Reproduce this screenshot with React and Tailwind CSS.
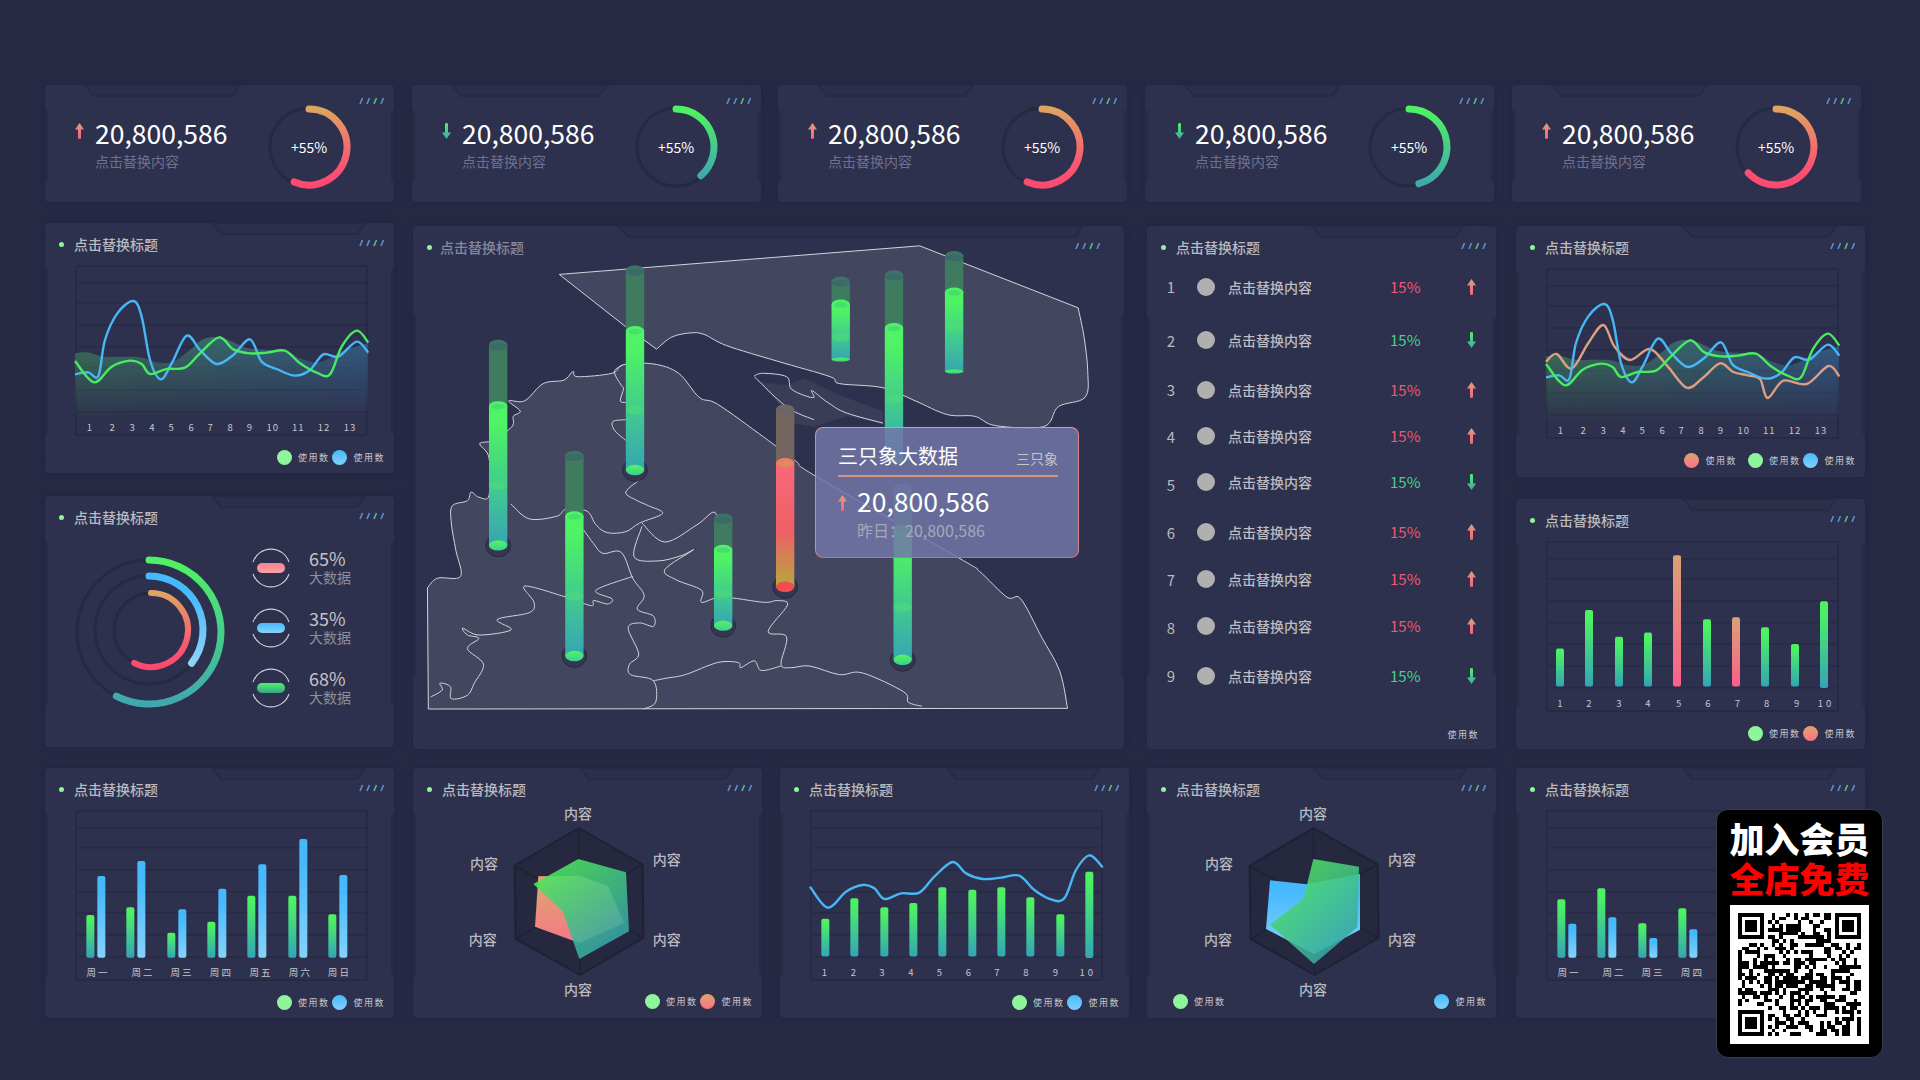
import React from "react";

// smooth line through points (catmull-rom to bezier)
const smooth = (pts) => {
  let d = `M${pts[0][0]},${pts[0][1]}`;
  for (let i = 0; i < pts.length - 1; i++) {
    const p0 = pts[i - 1] || pts[i];
    const p1 = pts[i];
    const p2 = pts[i + 1];
    const p3 = pts[i + 2] || p2;
    d += ` C${p1[0] + (p2[0] - p0[0]) / 6},${p1[1] + (p2[1] - p0[1]) / 6} ${p2[0] - (p3[0] - p1[0]) / 6},${p2[1] - (p3[1] - p1[1]) / 6} ${p2[0]},${p2[1]}`;
  }
  return d;
};

const toFrame = (pts, ox, oy, sy = 3) => pts.map(([x, y]) => [(x - ox) / 3, (y - oy) / sy]);

const parse = (s) => s.trim().split(/\s+/).map((t) => t.split(",").map(Number));

const arc = (cx, cy, r, deg) => {
  const a = (deg * Math.PI) / 180;
  return `M${cx},${cy - r} A${r},${r} 0 ${deg > 180 ? 1 : 0} 1 ${cx + r * Math.sin(a)},${cy - r * Math.cos(a)}`;
};

const poly = (pts) => pts.map((p) => p.join(",")).join(" ");

const BLUE = [[135,913],[175,907],[205,918],[225,810],[262,730],[310,693],[335,740],[360,870],[392,928],[425,880],[470,797],[510,840],[560,882],[610,855],[660,808],[695,875],[740,897],[795,917],[840,900],[880,853],[925,860],[980,815],[1015,848]];
const GREEN = [[135,873],[192,937],[245,890],[300,872],[335,882],[360,912],[410,897],[465,893],[510,850],[567,802],[610,838],[660,850],[710,848],[765,842],[810,880],[860,908],[900,913],[935,830],[980,782],[1015,818]];
const AREA = [[135,850],[170,847],[220,860],[280,860],[330,862],[380,877],[430,875],[480,840],[520,808],[570,802],[640,830],[680,838],[770,845],[810,865],[860,878],[900,865],[950,838],[1015,820]];
const TAN = [[135,866],[167,843],[212,887],[262,810],[307,756],[340,820],[387,861],[447,828],[500,880],[557,944],[605,915],[657,871],[697,897],[740,907],[777,918],[800,975],[847,923],[917,933],[982,879],[1015,910]];
const WAVE = [[107,365],[160,428],[215,380],[265,360],[300,370],[330,402],[380,385],[435,383],[480,335],[535,291],[575,325],[625,342],[680,338],[735,332],[780,375],[830,403],[870,400],[905,315],[945,271],[985,307]];

const Defs = () => (
  <svg width="0" height="0" className="absolute">
    <defs>
      <linearGradient id="gGreen" x1="0" y1="0" x2="0" y2="1"><stop offset="0.1" stopColor="#4df263" /><stop offset="1" stopColor="#34a5b5" /></linearGradient>
      <linearGradient id="gBlue" x1="0" y1="0" x2="0" y2="1"><stop offset="0.2" stopColor="#46b9fc" /><stop offset="1" stopColor="#84d3fa" /></linearGradient>
      <linearGradient id="gTan" x1="0" y1="0" x2="0" y2="1"><stop offset="0" stopColor="#d9a278" /><stop offset="1" stopColor="#f9608a" /></linearGradient>
      <linearGradient id="gRing" x1="0" y1="0" x2="0" y2="1"><stop offset="0" stopColor="#dfa45f" /><stop offset="0.75" stopColor="#fb5473" /><stop offset="1" stopColor="#fb4a70" /></linearGradient>
      <linearGradient id="gRingG" x1="0" y1="0" x2="0" y2="1"><stop offset="0.05" stopColor="#4ef064" /><stop offset="1" stopColor="#3fa8b0" /></linearGradient>
      <linearGradient id="gRingB" x1="0" y1="0" x2="0" y2="1"><stop offset="0.2" stopColor="#46b9fc" /><stop offset="1" stopColor="#8cd5f8" /></linearGradient>
      <linearGradient id="gAreaH" x1="0" y1="0" x2="1" y2="0"><stop offset="0" stopColor="#3f8a5c" /><stop offset="1" stopColor="#366a98" /></linearGradient>
      <linearGradient id="gFade" x1="0" y1="0" x2="0" y2="1"><stop offset="0" stopColor="#fff" stopOpacity="0.75" /><stop offset="1" stopColor="#fff" stopOpacity="0" /></linearGradient>
      <mask id="mFade" maskContentUnits="objectBoundingBox"><rect width="1" height="1" fill="url(#gFade)" /></mask>
      <linearGradient id="gRadarG" x1="0.2" y1="0.1" x2="0.8" y2="0.9"><stop offset="0" stopColor="#4ee45e" /><stop offset="1" stopColor="#35a3ab" /></linearGradient>
      <linearGradient id="gRadarT" x1="0.3" y1="0" x2="0.6" y2="1"><stop offset="0" stopColor="#dfa46f" /><stop offset="1" stopColor="#f8748a" /></linearGradient>
      <linearGradient id="gPillar" x1="0" y1="0" x2="0" y2="1"><stop offset="0.12" stopColor="#4ef463" /><stop offset="1" stopColor="#36a5b4" /></linearGradient>
      <linearGradient id="gPillarR" x1="0" y1="0" x2="0" y2="1"><stop offset="0" stopColor="#f76a78" /><stop offset="0.55" stopColor="#ef5f68" /><stop offset="1" stopColor="#b5a83c" /></linearGradient>
      <linearGradient id="gBase" x1="0" y1="0" x2="0" y2="1"><stop offset="0" stopColor="#52f560" /><stop offset="1" stopColor="#3ccf92" /></linearGradient>
    </defs>
  </svg>
);

// card outline details: top tab, cut sides and the four small hatches
const CardFrame = ({ w, h, notch = [167, 320], sideT = 47, sideB = 44, hatchX = 315, hatchY = 20 }) => (
  <svg className="absolute inset-0 pointer-events-none" width={w} height={h}>
    <polygon points={`0,${sideT - 3} 3,${sideT} 3,${h - sideB} 0,${h - sideB + 3}`} fill="#272a44" />
    <polygon points={`${w},${sideT - 3} ${w - 3},${sideT} ${w - 3},${h - sideB} ${w},${h - sideB + 3}`} fill="#272a44" />
    <polygon points={`${notch[0]},0 ${notch[0] + 9},11 ${notch[1] - 8},11 ${notch[1]},0`} fill="#2c2f4a" stroke="#272a44" strokeWidth="2" />
    {["#5a8fd0", "#5a8fd0", "#4fbf8f", "#5a8fd0"].map((c, i) => (
      <line key={i} x1={hatchX + i * 7} y1={hatchY + 3} x2={hatchX + i * 7 + 2.5} y2={hatchY - 3} stroke={c} strokeWidth="1.6" />
    ))}
  </svg>
);

const Title = ({ dim }) => (
  <div className="flex items-center h-[42px] pl-[14px] relative">
    <span className="w-[5px] h-[5px] rounded-full bg-[#90f59a]" />
    <span className={`text-[14px] font-medium leading-[20px] ${dim ? "ml-[8px] text-[#85879f]" : "ml-[10px] text-[#b9b9bf]"}`}>点击替换标题</span>
  </div>
);

const Legend = ({ items, between }) => (
  <div className={`flex items-center h-[15px] mt-[14px] pr-[9px] relative ${between ? "justify-between pl-[26px]" : "justify-end gap-[3px]"}`}>
    {items.map((c, i) => (
      <div key={i} className={`flex items-center gap-[6px] ${c.mr || ""}`}>
        <span className={`w-[15px] h-[15px] rounded-full ${c.cls}`} />
        <span className="text-[9px] tracking-[1.5px] text-[#c6c6cc] leading-[15px]">使用数</span>
      </div>
    ))}
  </div>
);

const GREEN_DOT = { cls: "bg-[#8ff59a]" };
const BLUE_DOT = { cls: "bg-linear-to-b from-[#46b9fc] to-[#7fd0fb]" };
const TAN_DOT = { cls: "bg-linear-to-b from-[#dfa270] to-[#fb6f84]" };

const Arrow = ({ up }) =>
  up ? (
    <svg width="9" height="16" viewBox="0 0 9 16" className="block">
      <path d="M4.5 0 L9 6.5 L6 6.5 L6 15 Q6 16 4.5 16 Q3 16 3 15 L3 6.5 L0 6.5 Z" fill="url(#gTan)" />
    </svg>
  ) : (
    <svg width="9" height="16" viewBox="0 0 9 16" className="block">
      <path d="M4.5 16 L9 9.5 L6 9.5 L6 1 Q6 0 4.5 0 Q3 0 3 1 L3 9.5 L0 9.5 Z" fill="url(#gRingG)" />
    </svg>
  );

const StatCard = ({ up, deg, cls = "" }) => (
  <div className={`relative w-[349px] h-[117px] bg-[#2e314d] rounded-[4px] shadow-[0_0_8px_rgba(32,34,58,0.6)] ${cls}`}>
    <CardFrame w={349} h={117} notch={[40, 195]} sideT={27} sideB={22} hatchY={16} />
    <div className="relative flex items-start h-full pl-[30px] pr-[40px]">
      <div className="mt-[38px] w-[9px]"><Arrow up={up} /></div>
      <div className="ml-[11px] mt-[33px]">
        <div className="text-[26.5px] leading-[30px] text-white">20,800,586</div>
        <div className="mt-[3px] text-[14px] leading-[20px] text-[#6e7091]">点击替换内容</div>
      </div>
      <div className="relative ml-auto mt-[17px] w-[90px] h-[90px]">
        <svg width="90" height="90">
          <circle cx="45" cy="45" r="39" fill="none" stroke="#262940" strokeWidth="3" />
          <path d={arc(45, 45, 38, deg)} fill="none" stroke={up ? "url(#gRing)" : "url(#gRingG)"} strokeWidth="7" strokeLinecap="round" />
        </svg>
        <div className="absolute inset-0 flex items-center justify-center text-[14px] text-white">+55%</div>
      </div>
    </div>
  </div>
);

const GRID = [17.7, 37.7, 60, 81.7, 102.7, 125, 146.7];

const ChartFrame = ({ children, labels }) => (
  <div className="ml-[30px] w-[293px] h-[171px] relative">
    <svg width="293" height="171" className="block overflow-visible">
      <rect x="1" y="1" width="291" height="169" fill="none" stroke="#272a44" strokeWidth="2" rx="2" />
      {GRID.map((y) => (
        <line key={y} x1="2" x2="291" y1={y} y2={y} stroke="#272a44" strokeWidth="1.5" />
      ))}
      {children}
      {labels.map(([t, x, ls]) => (
        <text key={t} x={x} y="162" textAnchor="middle" dominantBaseline="central" fontSize="9.5" fill="#c6c6cc" letterSpacing={ls || 0}>{t}</text>
      ))}
    </svg>
  </div>
);

const Bar = ({ x, top, bottom, fill }) => (
  <rect x={x - 4} y={top} width="8" height={bottom - top} rx="2" fill={fill} />
);

const LINE_LABELS = [["1",180],["2",248],["3",308],["4",367],["5",425],["6",485],["7",542],["8",602],["9",660],["10",728],["11",805],["12",882],["13",960]].map(([t, x]) => [t, (x - 135) / 3, 1]);

const LineChart = ({ tan }) => (
  <ChartFrame labels={LINE_LABELS}>
    <g mask="url(#mFade)">
      <path d={`${smooth(toFrame(AREA, 135, 585))} L293,155 L0,155 Z`} fill="url(#gAreaH)" />
    </g>
    {tan && <path d={smooth(toFrame(TAN, 135, 585))} fill="none" stroke="#dd9f80" strokeWidth="2.4" />}
    <path d={smooth(toFrame(BLUE, 135, 585))} fill="none" stroke="#47b7f6" strokeWidth="2.4" />
    <path d={smooth(toFrame(GREEN, 135, 585))} fill="none" stroke="#47ed5f" strokeWidth="2.4" />
  </ChartFrame>
);

const WEEK = [["周 一",173],["周 二",308],["周 三",425],["周 四",543],["周 五",662],["周 六",780],["周 日",897]];
const WeekBars = [[153,450,186,333],[273,427,306,288],[396,503,429,433],[516,470,549,371],[636,392,669,298],[759,392,792,222],[879,448,912,330]];

const WeekChart = ({ data }) => (
  <ChartFrame labels={WEEK.map(([t, x]) => [t, (x - 107) / 3])}>
    {data.map(([gx, gt, bx, bt], i) => (
      <g key={i}>
        <Bar x={(gx - 107) / 3} top={(gt - 135) / 3} bottom={147.7} fill="url(#gGreen)" />
        <Bar x={(bx - 107) / 3} top={(bt - 135) / 3} bottom={147.7} fill="url(#gBlue)" />
      </g>
    ))}
  </ChartFrame>
);

const TenBars = () => {
  const xs = [180,267,357,444,531,621,708,795,885,972];
  const tops = [1242,1130,1208,1195,971,1157,1151,1180,1229,1105];
  const lx = [180,267,357,444,536,624,712,800,890,978];
  return (
    <ChartFrame labels={lx.map((x, i) => [String(i + 1), (x - 138) / 3, i === 9 ? 3 : 0])}>
      {xs.map((x, i) => (
        <Bar key={x} x={(x - 138) / 3} top={(tops[i] - 930) / 2.9} bottom={i === 9 ? 147 : 145.5} fill={i === 4 || i === 6 ? "url(#gTan)" : "url(#gGreen)"} />
      ))}
    </ChartFrame>
  );
};

const WaveChart = () => {
  const xs = [153,240,330,417,504,594,681,768,858,945];
  const tops = [461,400,427,414,367,374,367,397,448,320];
  const lx = [150,237,323,410,495,582,668,755,843,940];
  return (
    <ChartFrame labels={lx.map((x, i) => [String(i + 1), (x - 107) / 3, i === 9 ? 3 : 0])}>
      {xs.map((x, i) => (
        <Bar key={x} x={(x - 107) / 3} top={(tops[i] - 135) / 3} bottom={i === 9 ? 148 : 146.5} fill="url(#gGreen)" />
      ))}
      <path d={smooth(toFrame(WAVE, 107, 135))} fill="none" stroke="#47b7f6" strokeWidth="2.4" />
    </ChartFrame>
  );
};

const Radar = ({ ox, hex, back, backFill, front, labels }) => {
  const cx = hex[0][0];
  const cy = (hex[0][1] + hex[3][1]) / 2;
  return (
    <svg width="349" height="170" viewBox={`${ox} 153 1047 510`} className="block overflow-visible relative">
      <polygon points={poly(hex)} fill="#25283f" stroke="#1f2136" strokeWidth="6" strokeLinejoin="round" />
      {hex.map((p, i) => (
        <line key={i} x1={cx} y1={cy} x2={p[0]} y2={p[1]} stroke="#1f2136" strokeWidth="5" />
      ))}
      <polygon points={poly(back)} fill={backFill} />
      <polygon points={poly(front)} fill="url(#gRadarG)" opacity="0.88" />
      {labels.map(([x, y], i) => (
        <text key={i} x={x} y={y} textAnchor="middle" dominantBaseline="central" fontSize="42" fontWeight="500" fill="#b9b9bf">内容</text>
      ))}
    </svg>
  );
};

const Card = ({ cls = "w-[349px] h-[251px]", w = 349, h = 251, frame = {}, dim, children }) => (
  <div className={`relative bg-[#2e314d] rounded-[4px] shadow-[0_0_8px_rgba(32,34,58,0.6)] flex flex-col shrink-0 ${cls}`}>
    <CardFrame w={w} h={h} {...frame} />
    <Title dim={dim} />
    {children}
  </div>
);

const Donut = () => (
  <svg width="170" height="170" viewBox="20 42 170 170" className="block shrink-0">
    <circle cx="105" cy="136" r="72" fill="none" stroke="#262940" strokeWidth="3" />
    <circle cx="105" cy="134" r="54" fill="none" stroke="#262940" strokeWidth="3" />
    <circle cx="107" cy="134" r="37" fill="none" stroke="#262940" strokeWidth="3" />
    <path d={arc(105, 136, 72, 207)} fill="none" stroke="url(#gRingG)" strokeWidth="7" strokeLinecap="round" />
    <path d={arc(105, 134, 54, 128)} fill="none" stroke="url(#gRingB)" strokeWidth="7" strokeLinecap="round" />
    <path d={arc(107, 134, 37, 207)} fill="none" stroke="url(#gRing)" strokeWidth="6" strokeLinecap="round" />
  </svg>
);

const PCTS = [
  ["65%", "bg-linear-to-b from-[#f8848c] to-[#fba0a6]"],
  ["35%", "bg-linear-to-b from-[#46b9fc] to-[#84d3fa]"],
  ["68%", "bg-linear-to-b from-[#4ef463] to-[#36a584]"],
];

const PctRow = ({ value, pill }) => (
  <div className="flex items-center h-[60px]">
    <div className="relative w-[40px] h-[40px] flex items-center justify-center">
      <svg width="40" height="40" className="absolute inset-0">
        <path d="M2,14 A19,19 0 0 1 38,14" fill="none" stroke="#d0d0d6" strokeWidth="1.1" />
        <path d="M2,26 A19,19 0 0 0 38,26" fill="none" stroke="#d0d0d6" strokeWidth="1.1" />
      </svg>
      <span className={`w-[28px] h-[10px] rounded-[5px] ${pill}`} />
    </div>
    <div className="ml-[18px]">
      <div className="text-[18px] leading-[19px] text-[#c4c4c8]">{value}</div>
      <div className="text-[14px] leading-[19px] text-[#8e8e98]">大数据</div>
    </div>
  </div>
);

const LIST = [
  { up: true, mt: "mt-[9px]", num: "pt-0" },
  { up: false, mt: "mt-[33px]", num: "pt-[2px]" },
  { up: true, mt: "mt-[30px]", num: "pt-0" },
  { up: true, mt: "mt-[26px]", num: "pt-[2px]" },
  { up: false, mt: "mt-[26px]", num: "pt-[6px]" },
  { up: true, mt: "mt-[30px]", num: "pt-[2px]" },
  { up: true, mt: "mt-[27px]", num: "pt-[2px]" },
  { up: true, mt: "mt-[27px]", num: "pt-[4px]" },
  { up: false, mt: "mt-[30px]", num: "pt-0" },
];

const ListCard = () => (
  <Card cls="w-[349px] h-[523px] mt-[3px] ml-[23px]" h={523} frame={{ notch: [165, 316], sideT: 94, sideB: 77 }}>
    <div className="relative flex flex-col flex-1">
      {LIST.map((r, i) => (
        <div key={i} className={`flex items-center h-[20px] ${r.mt}`}>
          <span className={`ml-[14px] w-[20px] text-center text-[15px] leading-[20px] text-[#b9b9bf] ${r.num}`}>{i + 1}</span>
          <span className="ml-[16px] w-[18px] h-[18px] rounded-full bg-[#b0b0b0]" />
          <span className="ml-[13px] w-[162px] text-[14px] leading-[20px] font-medium text-[#bcbcc2]">点击替换内容</span>
          <span className={`w-[30px] text-[15px] leading-[20px] ${r.up ? "text-[#ee5873]" : "text-[#49d08f]"}`}>15%</span>
          <span className="ml-[47px]"><Arrow up={r.up} /></span>
        </div>
      ))}
      <div className="mt-auto mb-[7px] pr-[17px] flex justify-end text-[9px] tracking-[1.5px] leading-[14px] text-[#c6c6cc]">使用数</div>
    </div>
  </Card>
);

// map drawn in the crop's own units, stretched over the 720x540 area
const TOP_LAND = `M325,158 L1110,75 L${smooth(parse("1455,255 1468,340 1476,440 1470,515 1412,542 1380,600 1275,597 1230,570 1170,565 1100,525 1030,487 935,475 915,455 800,410 690,365 640,332 610,328 570,340 537,375")).slice(1)} L470,310 Z`;
const MAIN_LAND = `M40,1420 L${smooth(parse("38,1068 60,1040 110,1035 100,960 90,880 92,830 125,815 133,790 150,805 172,800 172,690 152,650 180,640 222,600 225,570 240,555 215,525 250,525 290,475 335,465 355,440 365,455 440,445 465,420 530,418 585,445 630,515 670,535 770,630 840,700 885,745 1200,985 1240,1020 1300,1095 1330,1100 1375,1210 1415,1310 1432,1418")).slice(1)} Z`;
const BORDERS = [
  "220,825 260,868 320,860 340,840 385,845 405,885 430,908 470,905 500,880 550,852 520,830 495,815 470,790 505,750",
  "465,420 445,440 460,480 465,490 458,525 470,530",
  "470,640 445,610 442,585 470,580",
  "378,900 400,940 420,968 460,965 485,1040 510,1090 495,1130 530,1150 530,1180 500,1170 475,1185 498,1260 478,1290 480,1320 530,1338 535,1400 508,1420",
  "485,1035 405,1075 440,1100 430,1115 400,1105 395,1120 340,1095 250,1063 270,1110 260,1140 190,1160 220,1190 150,1205 115,1185 125,1205 150,1215 125,1245 160,1290 140,1345 125,1380 90,1390 88,1355 65,1345 70,1365 45,1385",
  "505,890 488,978 540,990 590,975 617,958 555,1015 580,1045 635,1075 635,1110 680,1095 770,1110 800,1105 822,1118 780,1195 820,1210 808,1290 830,1300 870,1295 935,1320 985,1315 1075,1370 1085,1400 1115,1412",
  "505,880 555,935 625,885 665,850 670,945",
  "530,1338 560,1330 600,1320 670,1285 715,1285 720,1300 750,1280 765,1308 808,1295",
  "750,452 770,445 820,455 830,490 860,510 880,515 875,495 910,530 950,560 1030,590",
  "750,455 800,520 835,555 880,580",
];

const PILLARS = [
  { x: 192, top: 362, bright: 540, mid: 770, base: 945, ring: true },
  { x: 490, top: 146, bright: 322, mid: 552, base: 726, ring: true },
  { x: 358, top: 684, bright: 860, mid: 1092, base: 1266, ring: true },
  { x: 682, top: 866, bright: 957, mid: 1085, base: 1178, ring: true },
  { x: 817, top: 550, bright: 705, base: 1065, ring: true, red: true },
  { x: 938, top: 178, bright: 245, mid: 340, base: 405 },
  { x: 1054, top: 160, bright: 313, mid: 520, base: 700 },
  { x: 1185, top: 104, bright: 210, mid: 310, base: 440 },
  { x: 1073, top: 780, bright: 900, mid: 1125, base: 1277, ring: true },
];

const Pillar = ({ x, top, bright, mid, base, ring, red }) => (
  <g>
    {ring && <ellipse cx={x} cy={base} rx="27" ry="33" fill="#34374f" stroke="#25283f" strokeWidth="1" vectorEffect="non-scaling-stroke" />}
    <rect x={x - 20} y={top} width="40" height={bright - top} fill={red ? "#75655f" : "#3f7c5f"} />
    <ellipse cx={x} cy={top} rx="20" ry="14" fill={red ? "#75655f" : "#3d7562"} />
    <ellipse cx={x} cy={top + 6} rx="20" ry="10" fill={red ? "#6d6468" : "#3c6a6a"} />
    <rect x={x - 20} y={bright} width="40" height={base - bright} fill={red ? "url(#gPillarR)" : "url(#gPillar)"} />
    <ellipse cx={x} cy={bright} rx="20" ry="14" fill={red ? "#f47a68" : "#4ef463"} />
    <ellipse cx={x} cy={bright + 2} rx="15" ry="8" fill={red ? "#c59a58" : "#45d873"} opacity="0.8" />
    {mid && <ellipse cx={x} cy={mid} rx="20" ry="13" fill="#4fdc78" opacity="0.55" />}
    <ellipse cx={x} cy={base} rx="20" ry={ring ? 15 : 6} fill={red ? "#f24c50" : "url(#gBase)"} />
  </g>
);

const MapCard = () => (
  <Card cls="w-[711px] h-[523px] mt-[3px] ml-[19px]" w={711} h={523} dim frame={{ notch: [206, 670], sideT: 90, sideB: 74, hatchX: 663, hatchY: 20 }}>
    <svg width="720" height="540" viewBox="0 0 1568 1568" preserveAspectRatio="none" className="absolute left-[-3px] top-[-6px]">
      <path d={TOP_LAND} fill="#ffffff" fillOpacity="0.1" stroke="#d4d4dc" strokeWidth="1" vectorEffect="non-scaling-stroke" />
      <path d={MAIN_LAND} fill="#ffffff" fillOpacity="0.1" stroke="#d4d4dc" strokeWidth="1" vectorEffect="non-scaling-stroke" />
      <path d="M760,470 L820,480 L860,460 L930,505 L1030,555 L1030,590 L950,570 L880,600 L835,590 L800,530 Z" fill="#ffffff" fillOpacity="0.06" />
      {BORDERS.map((s, i) => (
        <path key={i} d={smooth(parse(s))} fill="none" stroke="#d4d4dc" strokeWidth="1" vectorEffect="non-scaling-stroke" />
      ))}
      {PILLARS.map((p, i) => <Pillar key={i} {...p} />)}
    </svg>
    <div className="absolute left-[402px] top-[201px] w-[264px] h-[131px] rounded-[8px] border border-t-[#dca178] border-b-[#ee5e7c] border-x-[#d88c88] bg-[#7176a8]/85 pl-[22px] pr-[20px]">
      <div className="flex items-end justify-between h-[49px] border-b-2 border-[#d9957c] pb-[5px]">
        <span className="text-[20px] leading-[28px] text-white">三只象大数据</span>
        <span className="text-[14px] leading-[24px] text-[#c4c4cc]">三只象</span>
      </div>
      <div className="flex items-start">
        <div className="mt-[18px] w-[9px]"><Arrow up /></div>
        <div className="ml-[10px] mt-[8px]">
          <div className="text-[26.5px] leading-[32px] text-white">20,800,586</div>
          <div className="text-[16px] leading-[24px] mt-[1px] text-[#a6a8b6]">昨日：20,800,586</div>
        </div>
      </div>
    </div>
  </Card>
);

// qr pattern from a small seeded generator, finder squares fixed
const QR_N = 33;
const qrCells = () => {
  const cells = [];
  let s = 20800586;
  const inFinder = (x, y) => (x < 8 && y < 8) || (x >= QR_N - 8 && y < 8) || (x < 8 && y >= QR_N - 8);
  for (let y = 0; y < QR_N; y++) {
    for (let x = 0; x < QR_N; x++) {
      s = (s * 1103515245 + 12345) & 0x7fffffff;
      if (!inFinder(x, y) && (s >> 16) % 100 < 50) cells.push([x, y]);
    }
  }
  return cells;
};
const QR_CELLS = qrCells();

const Finder = ({ x, y }) => (
  <g>
    <rect x={x} y={y} width="7" height="7" fill="#000" />
    <rect x={x + 1} y={y + 1} width="5" height="5" fill="#fff" />
    <rect x={x + 2} y={y + 2} width="3" height="3" fill="#000" />
  </g>
);

const QrBadge = () => (
  <div className="absolute left-[1716px] top-[809px] w-[167px] h-[249px] bg-black rounded-[12px] border border-[#3c3c44] flex flex-col items-center pt-[8px]">
    <div className="text-[35px] leading-[40px] font-black text-white">加入会员</div>
    <div className="text-[35px] leading-[40px] font-black text-[#ff0000]">全店免费</div>
    <div className="mt-[7px] w-[139px] h-[139px] bg-white p-[8px]">
      <svg width="123" height="123" viewBox={`0 0 ${QR_N} ${QR_N}`} shapeRendering="crispEdges" className="block">
        {QR_CELLS.map(([x, y]) => <rect key={`${x}-${y}`} x={x} y={y} width="1" height="1" fill="#000" />)}
        <Finder x={0} y={0} />
        <Finder x={QR_N - 7} y={0} />
        <Finder x={0} y={QR_N - 7} />
      </svg>
    </div>
  </div>
);

const LABELS_A = [[504,162],[770,300],[770,540],[504,690],[218,540],[222,312]];
const LABELS_B = [[519,162],[786,300],[786,540],[519,690],[234,540],[237,312]];

const App = () => {
  return (
    <div className="relative w-[1920px] h-[1080px] overflow-hidden bg-[#272a45] pt-[85px] font-['Noto_Sans_CJK_SC',sans-serif]">
      <Defs />

      {/* top stats */}
      <div className="flex pl-[45px]">
        <StatCard up deg={203} />
        <StatCard deg={139} cls="ml-[18px]" />
        <StatCard up deg={203} cls="ml-[17px]" />
        <StatCard deg={165} cls="ml-[18px]" />
        <StatCard up deg={227} cls="ml-[18px]" />
      </div>

      {/* middle */}
      <div className="flex items-start mt-[21px] pl-[45px]">
        <div className="flex flex-col gap-[23px]">
          <Card h={250} cls="w-[349px] h-[250px]" frame={{ sideB: 41 }}>
            <LineChart />
            <Legend items={[GREEN_DOT, BLUE_DOT]} />
          </Card>
          <Card>
            <div className="relative flex pl-[19px]">
              <Donut />
              <div className="ml-[17px]">
                {PCTS.map(([v, p]) => <PctRow key={v} value={v} pill={p} />)}
              </div>
            </div>
          </Card>
        </div>
        <MapCard />
        <ListCard />
        <div className="flex flex-col gap-[22px] mt-[3px] ml-[20px]">
          <Card>
            <LineChart tan />
            <Legend items={[{ ...TAN_DOT, mr: "mr-[8px]" }, GREEN_DOT, BLUE_DOT]} />
          </Card>
          <Card h={250} cls="w-[349px] h-[250px]">
            <TenBars />
            <Legend items={[GREEN_DOT, TAN_DOT]} />
          </Card>
        </div>
      </div>

      {/* bottom */}
      <div className="flex mt-[19px] pl-[45px]">
        <Card h={250} cls="w-[349px] h-[250px]">
          <WeekChart data={WeekBars} />
          <Legend items={[GREEN_DOT, BLUE_DOT]} />
        </Card>
        <Card h={250} cls="w-[349px] h-[250px] ml-[19px]">
          <Radar
            ox={9}
            hex={[[506,207],[698,316],[700,537],[510,648],[317,540],[314,320]]}
            back={[[385,352],[510,350],[595,382],[642,492],[508,552],[375,503]]}
            backFill="url(#gRadarT)"
            front={[[505,300],[648,340],[657,517],[508,600],[458,457],[370,375]]}
            labels={LABELS_A}
          />
          <Legend items={[GREEN_DOT, TAN_DOT]} />
        </Card>
        <Card h={250} cls="w-[349px] h-[250px] ml-[18px]">
          <WaveChart />
          <Legend items={[GREEN_DOT, BLUE_DOT]} />
        </Card>
        <Card h={250} cls="w-[349px] h-[250px] ml-[18px]">
          <Radar
            ox={21}
            hex={[[521,207],[713,316],[716,537],[524,648],[332,540],[329,320]]}
            back={[[390,364],[500,376],[660,345],[660,512],[522,585],[378,510]]}
            backFill="url(#gBlue)"
            front={[[520,300],[657,323],[652,505],[522,615],[390,497],[490,420]]}
            labels={LABELS_B}
          />
          <Legend between items={[GREEN_DOT, BLUE_DOT]} />
        </Card>
        <Card h={250} cls="w-[349px] h-[250px] ml-[20px]">
          <WeekChart data={[[153,403,186,476],[273,370,306,457],[396,475,429,519],[516,430,549,493],[636,392,669,298],[759,392,792,222],[879,448,912,330]]} />
          <Legend items={[GREEN_DOT, BLUE_DOT]} />
        </Card>
      </div>

      <QrBadge />
    </div>
  );
};

export default App;
